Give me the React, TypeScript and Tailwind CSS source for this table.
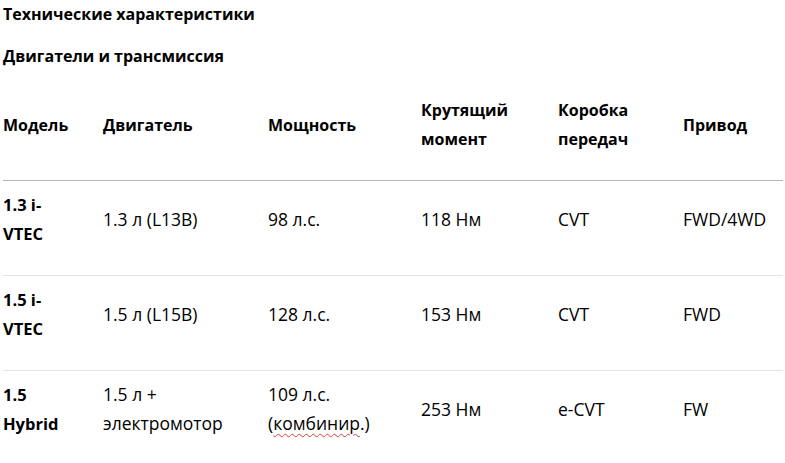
import React from 'react';

const headFont = { fontFamily: '"Open Sans", "Noto Sans", sans-serif' };

type Row = { model: string[]; engine: string[]; power: React.ReactNode[]; torque: string; gearbox: string; drive: string };

const rows: Row[] = [
  { model: ['1.3 i-', 'VTEC'], engine: ['1.3 л (L13B)'], power: ['98 л.с.'], torque: '118 Нм', gearbox: 'CVT', drive: 'FWD/4WD' },
  { model: ['1.5 i-', 'VTEC'], engine: ['1.5 л (L15B)'], power: ['128 л.с.'], torque: '153 Нм', gearbox: 'CVT', drive: 'FWD' },
  {
    model: ['1.5', 'Hybrid'],
    engine: ['1.5 л +', 'электромотор'],
    power: [
      '109 л.с.',
      <span key="k">
        (<span className="underline decoration-wavy decoration-[#e23b3b] decoration-1 underline-offset-[3px]">комбинир</span>.)
      </span>,
    ],
    torque: '253 Нм',
    gearbox: 'e-CVT',
    drive: 'FW',
  },
];

const Lines: React.FC<{ items: React.ReactNode[] }> = ({ items }) => (
  <>
    {items.map((t, i) => (
      <div key={i}>{t}</div>
    ))}
  </>
);

export default function App() {
  return (
    <div className="w-[785px] h-[463px] overflow-hidden bg-white text-black pl-[3px]" style={headFont}>
      <h1 className="text-[16px] font-bold leading-[29px]">Технические характеристики</h1>
      <h2 className="text-[16px] font-bold leading-[29px] mt-[13px]">Двигатели и трансмиссия</h2>
      <table className="table-fixed w-[780px] border-collapse">
        <colgroup>
          <col className="w-[100px]" />
          <col className="w-[165px]" />
          <col className="w-[153px]" />
          <col className="w-[137px]" />
          <col className="w-[125px]" />
          <col className="w-[100px]" />
        </colgroup>
        <thead>
          <tr className="h-[109px] border-b border-[#b4b4b4] text-[16px] font-bold leading-[29px] text-left">
            <th className="align-middle p-0">Модель</th>
            <th className="align-middle p-0">Двигатель</th>
            <th className="align-middle p-0">Мощность</th>
            <th className="align-middle p-0">Крутящий<br />момент</th>
            <th className="align-middle p-0">Коробка<br />передач</th>
            <th className="align-middle p-0">Привод</th>
          </tr>
        </thead>
        <tbody className="text-[17.5px] leading-[29px]">
          {rows.map((r, i) => (
            <tr key={i} className="h-[95px] border-b border-[#e3e3e3] last:border-b-0">
              <td className="align-middle p-0 pb-[17px] font-bold text-[16.5px]"><Lines items={r.model} /></td>
              <td className="align-middle p-0 pb-[17px]"><Lines items={r.engine} /></td>
              <td className="align-middle p-0 pb-[17px]"><Lines items={r.power} /></td>
              <td className="align-middle p-0 pb-[17px]">{r.torque}</td>
              <td className="align-middle p-0 pb-[17px]">{r.gearbox}</td>
              <td className="align-middle p-0 pb-[17px]">{r.drive}</td>
            </tr>
          ))}
        </tbody>
      </table>
    </div>
  );
}
